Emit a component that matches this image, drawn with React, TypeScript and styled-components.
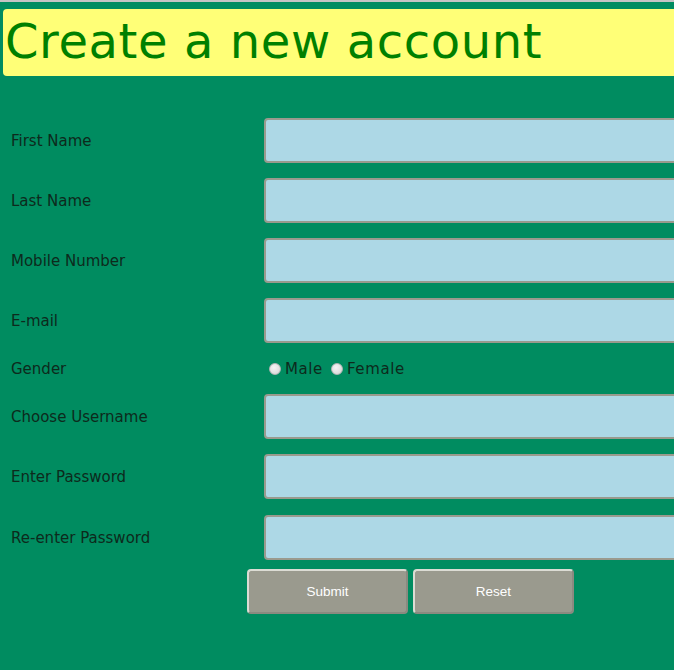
import React from "react";
import styled, { createGlobalStyle } from "styled-components";

const Global = createGlobalStyle`
  html, body { margin: 0; padding: 0; }
  body {
    background: #008c60;
    overflow: hidden;
    font-family: "DejaVu Sans", "Liberation Sans", sans-serif;
  }
`;

const Page = styled.div`
  border-top: 2px solid #c4c4c4;
  width: 674px;
  height: 668px;
  overflow: hidden;
`;

const Header = styled.h1`
  margin: 7px 0 0 3px;
  width: 700px;
  height: 67px;
  box-sizing: border-box;
  background: #ffff77;
  border-radius: 4px;
  color: #008000;
  font-family: "DejaVu Sans", sans-serif;
  font-weight: normal;
  font-size: 48px;
  line-height: 64px;
  padding-left: 2px;
  letter-spacing: 0.6px;
  white-space: nowrap;
`;

const Form = styled.form`
  display: grid;
  grid-template-columns: 253px 440px;
  row-gap: 15px;
  margin: 42px 0 0 11px;
  align-items: center;
`;

const Label = styled.label<{ $shift?: boolean }>`
  font-family: "DejaVu Sans", sans-serif;
  font-size: 15px;
  color: #0d2a1c;
  margin-top: ${(p) => (p.$shift ? "2px" : "0")};
`;

const TextInput = styled.input<{ $shift?: boolean }>`
  box-sizing: border-box;
  height: 45px;
  width: 440px;
  margin-top: ${(p) => (p.$shift ? "1px" : "0")};
  background: #add8e6;
  border: 2px solid #9a9a8e;
  border-radius: 4px;
  outline: none;
`;

const RadioGroup = styled.div`
  display: flex;
  align-items: center;
  padding-left: 5px;
  height: 21px;
  font-family: "DejaVu Sans", sans-serif;
  font-size: 15px;
  color: #0d2a1c;
`;

const Radio = styled.input`
  appearance: none;
  width: 12px;
  height: 12px;
  margin: 0 4px 0 0;
  border-radius: 50%;
  border: 1px solid #b5b5b5;
  background: radial-gradient(circle at 40% 35%, #f4f4f4, #d2d2d2);
  box-sizing: border-box;
`;

const RadioText = styled.span<{ $gap?: boolean }>`
  margin-right: ${(p) => (p.$gap ? "8px" : "0")};
  letter-spacing: 0.6px;
`;

const ButtonRow = styled.div`
  display: flex;
  gap: 5px;
  margin: 9px 0 0 247px;
`;

const Button = styled.button`
  width: 161px;
  height: 45px;
  box-sizing: border-box;
  background: #9a9a8e;
  color: #fff;
  font-family: "Liberation Sans", Arial, sans-serif;
  font-size: 13.5px;
  border: 2px solid;
  border-color: #dcdcd4 #8a8a80 #8a8a80 #dcdcd4;
  border-radius: 4px;
`;

const fields1 = ["First Name", "Last Name", "Mobile Number", "E-mail"];
const fields2 = ["Choose Username", "Enter Password", "Re-enter Password"];

export default function App() {
  return (
    <Page>
      <Global />
      <Header>Create a new account</Header>
      <Form onSubmit={(e) => e.preventDefault()}>
        {fields1.map((f) => (
          <React.Fragment key={f}>
            <Label>{f}</Label>
            <TextInput type="text" />
          </React.Fragment>
        ))}
        <Label>Gender</Label>
        <RadioGroup>
          <Radio type="radio" name="g" />
          <RadioText $gap>Male</RadioText>
          <Radio type="radio" name="g" />
          <RadioText>Female</RadioText>
        </RadioGroup>
        {fields2.map((f, i) => (
          <React.Fragment key={f}>
            <Label $shift={i === 2}>{f}</Label>
            <TextInput
              $shift={i === 2}
              type={f.includes("Password") ? "password" : "text"}
            />
          </React.Fragment>
        ))}
      </Form>
      <ButtonRow>
        <Button type="submit">Submit</Button>
        <Button type="reset">Reset</Button>
      </ButtonRow>
    </Page>
  );
}
